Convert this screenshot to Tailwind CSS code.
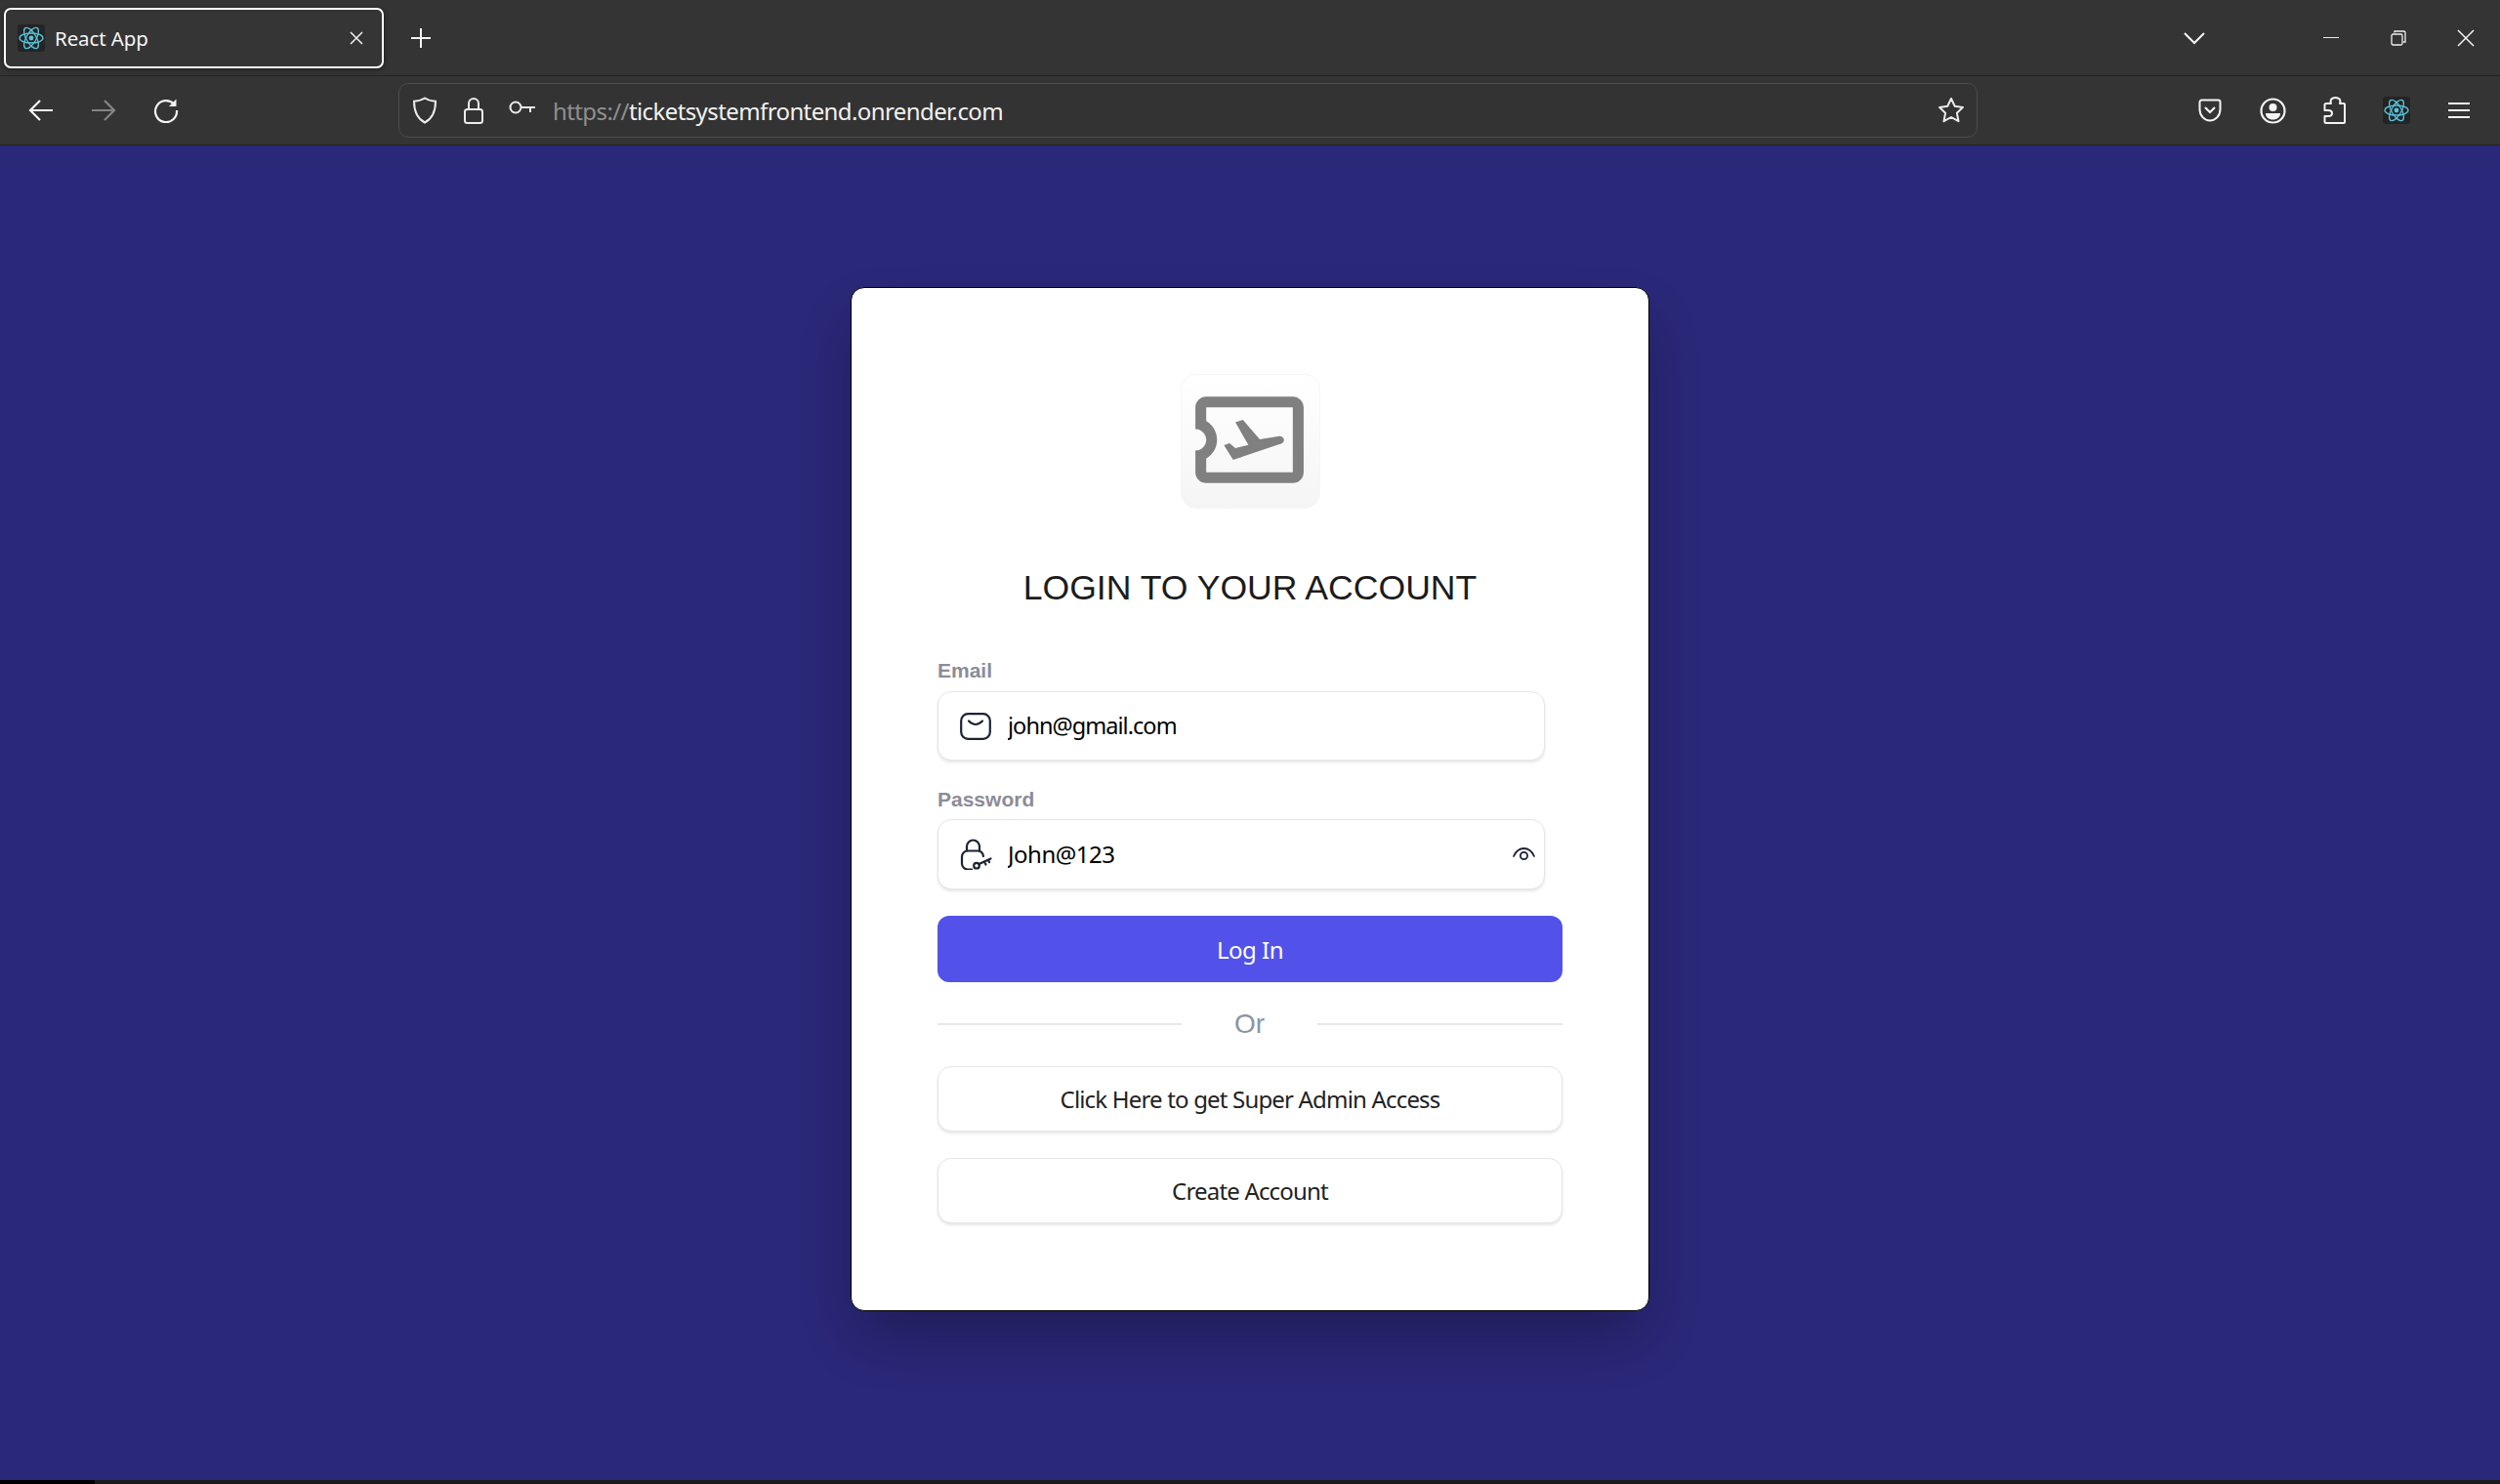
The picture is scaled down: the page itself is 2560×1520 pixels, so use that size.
<!DOCTYPE html>
<html lang="en">
  <head>
    <meta charset="utf-8" />
    <script src="https://cdn.jsdelivr.net/npm/@tailwindcss/browser@4"></script>
    <title>React App</title>
  </head>
  <body class="m-0 bg-[#2a2878]">
    <div class="flex h-[1520px] w-[2560px] flex-col overflow-hidden font-['Noto_Sans',sans-serif]">
      <!-- tab strip -->
      <div class="flex h-[78px] shrink-0 items-center border-b border-[#222222] bg-[#343434] text-white">
        <div class="ml-[4px] flex h-[62px] w-[389px] items-center rounded-[7px] border-2 border-white bg-[#353535] pl-[12px] shadow-[0_1px_4px_rgba(0,0,0,0.5)]">
          <div class="flex h-[28px] w-[28px] items-center justify-center rounded-[3px] bg-[#242424]">
            <svg class="h-[28px] w-[28px]" viewBox="0 0 28 28" fill="none" stroke="#58c4dc" stroke-width="1.3"><circle cx="14" cy="14" r="2.4" fill="#58c4dc" stroke="none"/><ellipse cx="14" cy="14" rx="12" ry="5"/><ellipse cx="14" cy="14" rx="12" ry="5" transform="rotate(60 14 14)"/><ellipse cx="14" cy="14" rx="12" ry="5" transform="rotate(120 14 14)"/></svg>
          </div>
          <span class="ml-[10px] translate-y-[1px] text-[20.5px] leading-none tracking-[-0.1px] text-[#f4f4f4]">React App</span>
          <svg class="ml-auto mr-[18px] h-[16px] w-[16px]" viewBox="0 0 16 16" fill="none" stroke="#f0f0f0" stroke-width="1.5"><path d="M2 2l12 12M14 2L2 14"/></svg>
        </div>
        <svg class="ml-[27px] h-[22px] w-[22px]" viewBox="0 0 22 22" fill="none" stroke="#f4f4f4" stroke-width="2"><path d="M11 1v20M1 11h20"/></svg>
        <div class="flex-1"></div>
        <svg class="h-[14px] w-[22px]" viewBox="0 0 22 14" fill="none" stroke="#f4f4f4" stroke-width="2"><path d="M1 2l10 10L21 2"/></svg>
        <div class="ml-[121px] h-[1.5px] w-[16px] bg-[#e8e8e8]"></div>
        <svg class="ml-[53px] h-[16px] w-[16px]" viewBox="0 0 16 16" fill="none" stroke="#f0f0f0" stroke-width="1.3"><rect x="1" y="4" width="11" height="11" rx="1.5"/><path d="M4 2.6V1h9.5A1.5 1.5 0 0 1 15 2.5V12h-2"/></svg>
        <svg class="ml-[52px] mr-[26px] h-[18px] w-[18px]" viewBox="0 0 18 18" fill="none" stroke="#f4f4f4" stroke-width="1.5"><path d="M1 1l16 16M17 1L1 17"/></svg>
      </div>

      <!-- toolbar -->
      <div class="flex h-[71px] shrink-0 items-center border-b border-[#222222] bg-[#343434] pl-[10px] text-white">
        <div class="flex w-[64px] justify-center">
          <svg class="h-[24px] w-[26px]" viewBox="0 0 26 24" fill="none" stroke="#f4f4f4" stroke-width="2.2"><path d="M25 12H3M12 2L2 12l10 10"/></svg>
        </div>
        <div class="flex w-[64px] justify-center">
          <svg class="h-[24px] w-[26px]" viewBox="0 0 26 24" fill="none" stroke="#858585" stroke-width="2.2"><path d="M1 12h22M14 2l10 10-10 10"/></svg>
        </div>
        <div class="flex w-[64px] justify-center">
          <svg class="h-[26px] w-[26px]" viewBox="0 0 26 26" fill="none" stroke="#f4f4f4" stroke-width="2.2"><path d="M21 6.5A11 11 0 1 0 24 13"/><path d="M23.5 1.5v7.5H16" fill="#f4f4f4" stroke="none"/></svg>
        </div>
        <div class="ml-[206px] flex h-[56px] w-[1617px] items-center rounded-[10px] border border-[#4c4c4c] bg-[#333333]">
          <svg class="ml-[13px] h-[28px] w-[26px]" viewBox="0 0 26 28" fill="none" stroke="#ececec" stroke-width="2"><path d="M13 1.500c3 2 6.500 3 11 3.200 0 10-3 17.500-11 21.800C5 22.200 2 14.700 2 4.700c4.500-.2 8-1.200 11-3.200z"/></svg>
          <svg class="ml-[26px] h-[28px] w-[22px]" viewBox="0 0 22 28" fill="none" stroke="#ececec" stroke-width="2"><path d="M6 13V7a5 5 0 0 1 10 0v6"/><rect x="2" y="13" width="18" height="14" rx="2.500"/></svg>
          <svg class="ml-[25px] h-[16px] w-[28px] -translate-y-[2px]" viewBox="0 0 28 16" fill="none" stroke="#ececec" stroke-width="2"><circle cx="7" cy="7" r="5.500"/><path d="M12.500 7H27M22 7v5"/></svg>
          <div class="ml-[17px] translate-y-[1px] text-[24px] leading-none tracking-[-0.6px] text-[#f1f1f1]"><span class="text-[#8f8f8f]">https://</span>ticketsystemfrontend.onrender.com</div>
          <svg class="ml-auto mr-[12px] h-[28px] w-[28px]" viewBox="0 0 28 28" fill="none" stroke="#ececec" stroke-width="2" stroke-linejoin="round"><path d="M14 2l3.700 7.800 8.300 1.100-6.100 5.800 1.600 8.500L14 21l-7.500 4.200 1.600-8.500L2 10.900l8.300-1.100z"/></svg>
        </div>
        <div class="ml-[206px] flex w-[64px] justify-center">
          <svg class="h-[24px] w-[24px]" viewBox="0 0 24 24" fill="none" stroke="#f4f4f4" stroke-width="2"><path d="M3.500 1.500h17A2 2 0 0 1 22.500 3.500V11a10.500 11.500 0 0 1-21 0V3.500a2 2 0 0 1 2-2z"/><path d="M7 9l5 5 5-5" stroke-width="2.200"/></svg>
        </div>
        <div class="flex w-[64px] justify-center">
          <svg class="h-[27px] w-[27px]" viewBox="0 0 27 27" fill="none"><circle cx="13.500" cy="13.500" r="12" stroke="#f4f4f4" stroke-width="2.200"/><circle cx="13.500" cy="10" r="4" fill="#f4f4f4"/><path d="M6 16h15c0 4-3 6.500-7.500 6.500S6 20 6 16z" fill="#f4f4f4"/></svg>
        </div>
        <div class="flex w-[63px] justify-center">
          <svg class="h-[28px] w-[24px]" viewBox="0 0 24 28" fill="none" stroke="#f4f4f4" stroke-width="2" stroke-linejoin="round"><path d="M3 7H8C7 4.500 7.500 1 12.500 1S18 4.500 17 7H21a1 1 0 0 1 1 1V26a1 1 0 0 1-1 1H3a1.500 1.500 0 0 1-1.500-1.500V20H5c2.500 0 4-1 4-3s-1.500-3-4-3H1.500V8.500A1.500 1.500 0 0 1 3 7z"/></svg>
        </div>
        <div class="flex w-[63px] justify-center">
          <div class="flex h-[28px] w-[28px] items-center justify-center rounded-[3px] bg-[#242424]">
            <svg class="h-[28px] w-[28px]" viewBox="0 0 28 28" fill="none" stroke="#58c4dc" stroke-width="1.300"><circle cx="14" cy="14" r="2.400" fill="#58c4dc" stroke="none"/><ellipse cx="14" cy="14" rx="12" ry="5"/><ellipse cx="14" cy="14" rx="12" ry="5" transform="rotate(60 14 14)"/><ellipse cx="14" cy="14" rx="12" ry="5" transform="rotate(120 14 14)"/></svg>
          </div>
        </div>
        <div class="flex w-[66px] justify-center">
          <svg class="h-[18px] w-[22px]" viewBox="0 0 22 18" fill="none" stroke="#f0f0f0" stroke-width="2.200"><path d="M0 2h22M0 9h22M0 16h22"/></svg>
        </div>
      </div>

      <!-- page -->
      <main class="flex-1 bg-[#2a2878] pt-[145px]">
        <div class="mx-auto flex h-[1049px] w-[818px] flex-col rounded-[14px] border border-black bg-white pt-[88px] pl-[88px] pr-[88px] shadow-[0_30px_60px_-10px_rgba(0,0,0,0.3)]">
          <div class="flex h-[138px] w-[143px] items-center justify-center self-center rounded-[16px] border border-[#f6f6f6] bg-gradient-to-b from-white to-[#f5f5f5]">
            <svg class="h-[133px] w-[133px] -translate-x-[1px] -translate-y-[2px]" viewBox="0 0 24 24" fill="#808080">
              <path fill-rule="evenodd" d="M4 4h16c1.100 0 2 .9 2 2v12c0 1.100-.9 2-2 2H4c-1.100 0-2-.9-2-2v-4c1.100 0 2-.9 2-2s-.9-2-2-2V6c0-1.100.9-2 2-2zm0 2v2.540C5.200 9.230 6 10.520 6 12c0 1.470-.81 2.770-2 3.460V18h16V6H4z"/>
              <path d="M9.390 8.740l1.380-.42 3.130 3.610 3.600-.6c.4-.07.8.2.85.6.05.4-.15.680-.55.800L8.970 15.700l-1.690-2.700 1.020-.35 1.090.9 2.400-.6z"/>
            </svg>
          </div>

          <h1 class="mt-[59px] h-[44px] text-center font-['Liberation_Sans',sans-serif] text-[35.6px] font-normal leading-[44px] text-[#1c1c1c]">LOGIN TO YOUR ACCOUNT</h1>

          <label class="mt-[51px] h-[24px] font-['Liberation_Sans',sans-serif] text-[21px] font-bold leading-[24px] text-[#8c8c99]">Email</label>
          <div class="mt-[9px] flex h-[71px] w-[622px] items-center rounded-[14px] border border-[#e6e6e6] bg-white pl-[22px] shadow-[0_2px_3px_rgba(0,0,0,0.1)]">
            <svg class="h-[28px] w-[32px]" viewBox="0 0 32 28" fill="none" stroke="#1b2233" stroke-width="2.200"><rect x="1.200" y="1.200" width="29.600" height="25.600" rx="7"/><path d="M9 8.500c2 2 4.500 3.500 7 3.500s5-1.500 7-3.500" stroke-linecap="round"/></svg>
            <input class="ml-[17px] flex-1 bg-transparent text-[23.5px] tracking-[-0.95px] text-black outline-none" value="john@gmail.com" />
          </div>

          <label class="mt-[28px] h-[24px] font-['Liberation_Sans',sans-serif] text-[21px] font-bold leading-[24px] text-[#8c8c99]">Password</label>
          <div class="mt-[8px] flex h-[72px] w-[622px] items-center rounded-[14px] border border-[#e6e6e6] bg-white pl-[22px] pr-[9px] shadow-[0_2px_3px_rgba(0,0,0,0.1)]">
            <svg class="h-[32px] w-[34px]" viewBox="0 0 34 32" fill="none" stroke="#1b2233" stroke-width="2.200" stroke-linecap="round"><path d="M7 12.500V8a6.500 6.500 0 0 1 13 0v4.500"/><path d="M24 18c-.5-3-2.500-5.500-6-5.500H8a6 6 0 0 0-6 6v7a6 6 0 0 0 6 6h4"/><circle cx="17" cy="27.700" r="2.800"/><path d="M19.500 26L31.500 20.500M25 23.500l1.500 3M29 21.700l1 2.500"/></svg>
            <input class="ml-[15px] flex-1 bg-transparent text-[24px] tracking-[-0.5px] text-black outline-none" value="John@123" />
            <svg class="h-[14px] w-[23px]" viewBox="0 0 23 14" fill="none" stroke="#1b2233" stroke-width="1.800" stroke-linecap="round"><path d="M1 9C3.500 3.500 7 1 11.500 1S19.500 3.500 22 9"/><circle cx="11.500" cy="8.500" r="3.600"/></svg>
          </div>

          <button class="mt-[27px] h-[68px] rounded-[12px] bg-[#5252ea] pt-[1px] text-[24px] tracking-[-0.5px] text-white">Log In</button>

          <div class="mt-[25px] flex h-[36px] items-center">
            <div class="h-[2px] w-[250px] bg-[#e8e8e8]"></div>
            <span class="flex-1 text-center font-['Liberation_Sans',sans-serif] text-[28px] leading-none text-[#8a94a6]">Or</span>
            <div class="h-[2px] w-[251px] bg-[#e8e8e8]"></div>
          </div>

          <button class="mt-[25px] h-[67px] rounded-[14px] border border-[#e6e6e6] bg-white pt-[1px] text-[24px] tracking-[-0.82px] text-[#222222] shadow-[0_2px_3px_rgba(0,0,0,0.1)]">Click Here to get Super Admin Access</button>
          <button class="mt-[27px] h-[67px] rounded-[14px] border border-[#e6e6e6] bg-white pt-[1px] text-[24px] tracking-[-0.82px] text-[#222222] shadow-[0_2px_3px_rgba(0,0,0,0.1)]">Create Account</button>
        </div>
      </main>

      <!-- taskbar edge -->
      <div class="flex h-[4px] shrink-0">
        <div class="w-[97px] bg-black"></div>
        <div class="flex-1 bg-[#1a1a1a]"></div>
      </div>
    </div>
  </body>
</html>
